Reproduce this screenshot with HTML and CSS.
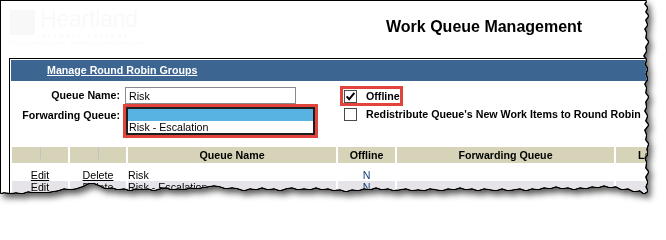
FILE: index.html
```html
<!DOCTYPE html>
<html lang="en">
<head>
<meta charset="utf-8">
<title>Work Queue Management</title>
<link rel="stylesheet" href="styles.css">
</head>
<body>
<div class="frame">
  <div class="shadow">
    <div class="sheet">
      <header class="top">
        <div class="logo">
          <div class="logo-row">
            <span class="logo-mark"></span>
            <div class="logo-words">
              <span class="logo-name">Heartland</span>
              <span class="logo-sub">PAYMENT SYSTEMS</span>
            </div>
          </div>
          <div class="logo-tag">The Highest Standards &middot; The Most Trusted Transactions</div>
        </div>
        <h1 class="title">Work Queue Management</h1>
      </header>

      <section class="panel">
        <div class="panel-head"><a class="panel-link">Manage Round Robin Groups</a></div>

        <div class="form">
          <label class="lbl">Queue Name:</label>
          <div class="field"><input class="input" type="text" value="Risk" readonly></div>
          <div class="opt opt-first">
            <span class="opt-box hl">
              <span class="chk"><svg viewBox="0 0 11 11" width="11" height="11"><path d="M1.6 5.4 L4.2 8.2 L9.4 1.8" fill="none" stroke="#000" stroke-width="2"/></svg></span>
              <span class="opt-text">Offline</span>
            </span>
          </div>

          <label class="lbl lbl-list">Forwarding Queue:</label>
          <div class="field">
            <div class="listbox">
              <div class="option sel"></div>
              <div class="option">Risk - Escalation</div>
            </div>
          </div>
          <div class="opt">
            <span class="opt-box">
              <span class="chk"></span>
              <span class="opt-text">Redistribute Queue's New Work Items to Round Robin</span>
            </span>
          </div>
        </div>

        <table class="grid">
          <colgroup>
            <col class="w-edit"><col class="w-del"><col class="w-name"><col class="w-off"><col class="w-fwd"><col class="w-last">
          </colgroup>
          <thead>
            <tr>
              <th><i class="tick"></i></th>
              <th><i class="tick"></i></th>
              <th>Queue Name</th>
              <th>Offline</th>
              <th>Forwarding Queue</th>
              <th class="th-last">Last</th>
            </tr>
          </thead>
          <tbody>
            <tr class="spacer"><td colspan="6"></td></tr>
            <tr>
              <td class="c"><a class="lnk">Edit</a></td>
              <td class="c"><a class="lnk">Delete</a></td>
              <td>Risk</td>
              <td class="c flag">N</td>
              <td></td>
              <td></td>
            </tr>
            <tr class="alt">
              <td class="c"><a class="lnk">Edit</a></td>
              <td class="c"><a class="lnk">Delete</a></td>
              <td>Risk - Escalation</td>
              <td class="c flag">N</td>
              <td></td>
              <td></td>
            </tr>
          </tbody>
        </table>
      </section>
    </div>
  </div>
</div>
</body>
</html>
```
FILE: styles.css
```css
html, body {
  margin: 0;
  padding: 0;
  background: #fff;
  overflow: hidden;
}

body {
  font-family: "Liberation Sans", Arial, sans-serif;
  font-size: 8pt;
  color: #000;
}

.frame {
  width: 666px;
  height: 212px;
  overflow: hidden;
  background: #fff;
}

.shadow {
  width: 666px;
  height: 212px;
  filter: drop-shadow(1px 0 0 #000) drop-shadow(-1px 0 0 #000) drop-shadow(0 1px 0 #000) drop-shadow(0 -1px 0 #000) drop-shadow(3px 4px 3px rgba(0, 0, 0, 0.65));
}

.sheet {
  width: 666px;
  height: 212px;
  overflow: hidden;
  background: #fff;
  clip-path: polygon(
    1px 1px, 646px 1px, 644px 4px, 647px 8px, 645px 12px, 648px 16px, 645px 20px, 647px 25px, 644px 29px,
    646px 33px, 645px 38px, 648px 42px, 645px 47px, 646px 51px, 643px 56px, 646px 60px, 644px 64px,
    647px 69px, 645px 74px, 647px 79px, 644px 84px, 646px 88px, 645px 93px, 648px 97px, 645px 102px,
    646px 107px, 644px 111px, 647px 116px, 645px 121px, 648px 125px, 644px 130px, 646px 135px, 645px 140px,
    648px 144px, 646px 149px, 647px 154px, 644px 158px, 646px 163px, 645px 168px, 648px 172px, 645px 177px,
    647px 182px, 645px 187px, 647px 191px,
    644px 193px, 640px 190px, 634px 191px, 628px 188px, 622px 189px, 616px 186px, 610px 187px, 604px 185px,
    598px 187px, 592px 186px, 586px 188px, 580px 187px, 574px 189px, 568px 187px, 562px 188px, 556px 186px,
    550px 188px, 544px 187px, 538px 189px, 532px 188px, 526px 190px, 520px 188px, 514px 189px, 508px 190px,
    502px 188px, 496px 190px, 490px 189px, 484px 188px, 478px 190px, 472px 188px, 466px 189px, 460px 187px,
    454px 189px, 448px 188px, 442px 190px, 436px 189px, 430px 188px, 424px 190px, 418px 189px, 412px 190px,
    406px 188px, 400px 189px, 394px 190px, 388px 188px, 382px 189px, 376px 187px, 370px 189px, 364px 188px,
    358px 190px, 352px 189px, 346px 191px, 340px 189px, 334px 190px, 328px 188px, 322px 189px, 316px 187px,
    310px 189px, 304px 188px, 298px 189px, 292px 187px, 286px 188px, 280px 190px, 274px 188px, 268px 189px,
    262px 187px, 256px 189px, 250px 188px, 244px 190px, 238px 188px, 232px 187px, 226px 188px, 220px 186px,
    214px 185px, 208px 186px, 202px 187px, 196px 188px, 190px 187px, 184px 189px, 178px 188px, 172px 189px,
    166px 187px, 160px 188px, 154px 190px, 148px 188px, 142px 189px, 136px 188px, 130px 190px, 124px 188px,
    118px 189px, 112px 187px, 106px 188px, 100px 185px, 95px 183px, 88px 183px, 82px 186px, 76px 188px,
    70px 189px, 64px 188px, 58px 190px, 52px 191px, 46px 192px, 40px 192px, 34px 192px, 28px 191px,
    22px 193px, 16px 192px, 10px 193px, 4px 192px, 1px 193px
  );
}

/* ---------- header ---------- */
.top {
  display: flex;
  height: 58px;
}

.logo {
  width: 386px;
  flex: none;
  box-sizing: border-box;
  padding: 6px 0 0 10px;
}

.logo-row {
  display: flex;
  gap: 5px;
  align-items: flex-start;
}

.logo-mark {
  width: 25px;
  height: 25px;
  margin-top: 4px;
  background: #f8f8f8;
}

.logo-words {
  display: flex;
  flex-direction: column;
}

.logo-name {
  font-size: 23px;
  line-height: 27px;
  color: #f9f9f9;
  letter-spacing: -0.2px;
}

.logo-sub {
  font-size: 5px;
  font-weight: bold;
  letter-spacing: 2.6px;
  line-height: 6px;
  color: #f9f9f9;
  padding-left: 2px;
}

.logo-tag {
  margin-top: 1px;
  font-size: 5.4px;
  line-height: 7px;
  color: #f9f9f9;
  white-space: nowrap;
}

.title {
  margin: 0;
  padding-top: 18px;
  font-size: 16px;
  line-height: 18px;
  font-weight: bold;
  white-space: nowrap;
}

/* ---------- panel ---------- */
.panel {
  margin-left: 9px;
  width: 700px;
  border: 1px solid #000;
  border-right: none;
  padding: 1px;
}

.panel-head {
  height: 21px;
  line-height: 21px;
  background: #3c6592;
  padding-left: 36px;
}

.panel-link {
  color: #fff;
  font-weight: bold;
  text-decoration: underline;
}

/* ---------- form ---------- */
.form {
  display: grid;
  grid-template-columns: 114px 218px auto;
  row-gap: 3px;
  align-items: start;
  padding-top: 6px;
}

.lbl {
  text-align: right;
  padding-right: 5px;
  font-weight: bold;
  line-height: 17px;
  white-space: nowrap;
}

.lbl-list {
  padding-top: 2px;
  line-height: 12px;
}

.input {
  display: block;
  box-sizing: border-box;
  width: 171px;
  height: 17px;
  margin: 0;
  padding: 0 3px;
  border: 1px solid #8a8a8a;
  font-family: "Liberation Sans", Arial, sans-serif;
  font-size: 8pt;
  color: #000;
  background: #fff;
  outline: none;
}

.listbox {
  margin-left: 1px;
  width: 189px;
  box-sizing: border-box;
  border: 2px solid #1e1e1e;
  outline: 3px solid #e0443c;
  background: #fff;
}

.option {
  height: 12px;
  line-height: 12px;
  padding-left: 1px;
  white-space: nowrap;
}

.option.sel {
  background: #58b3e3;
}

.opt-first {
  margin-top: 2px;
}

.opt-box {
  display: inline-flex;
  align-items: center;
  gap: 9px;
  padding: 1px 0 0 1px;
  white-space: nowrap;
}

.opt-box.hl {
  outline: 3px solid #e0443c;
}

.chk {
  display: inline-flex;
  align-items: center;
  justify-content: center;
  width: 13px;
  height: 13px;
  box-sizing: border-box;
  border: 1px solid #4a4a4a;
  background: #fff;
}

.opt-text {
  font-weight: bold;
  line-height: 13px;
}

/* ---------- table ---------- */
.grid {
  margin-top: 12px;
  margin-left: -1px;
  width: 658px;
  table-layout: fixed;
  border-collapse: separate;
  border-spacing: 2px 0;
}

.w-edit { width: 56px; }
.w-del { width: 56px; }
.w-name { width: 208px; }
.w-off { width: 57px; }
.w-fwd { width: 217px; }
.w-last { width: 50px; }

.grid th {
  height: 16px;
  padding: 0;
  line-height: 16px;
  background: #d6d3b8;
  font-weight: bold;
  text-align: center;
  white-space: nowrap;
  overflow: hidden;
}

.grid th.th-last {
  text-align: left;
  padding-left: 22px;
}

.tick {
  display: inline-block;
  width: 1px;
  height: 12px;
  background: #c2c2c2;
  vertical-align: top;
}

.grid td {
  height: 12px;
  padding: 0;
  line-height: 12px;
  white-space: nowrap;
  overflow: hidden;
}

.grid .spacer td {
  height: 6px;
  line-height: 6px;
}

.grid .alt td {
  background: #e6e3e9;
}

.grid td.c {
  text-align: center;
}

.lnk {
  color: #000;
  text-decoration: underline;
}

.flag {
  color: #173f78;
}
```
